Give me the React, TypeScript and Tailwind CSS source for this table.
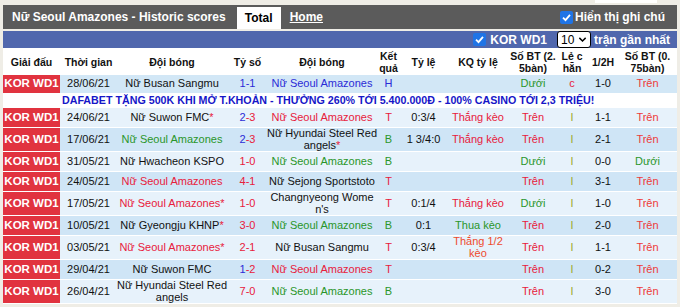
import type { ReactNode } from "react";

const RED = "text-[#e8203c]";
const RED2 = "text-[#ee3a3a]";
const GREEN = "text-[#2a962a]";
const BLUE = "text-[#2b2bd6]";
const OLIVE = "text-[#9aa522]";

const cols =
  "grid grid-cols-[57px_57px_110px_41px_108px_25px_45px_64px_46px_32px_30px_59px]";

type Match = {
  date: string;
  home: ReactNode;
  score: ReactNode;
  away: ReactNode;
  res: ReactNode;
  hdp: string;
  hdpRes: ReactNode;
  ou: ReactNode;
  oe: ReactNode;
  ht: string;
  ou2: ReactNode;
  tall?: boolean;
  dark?: boolean;
};

const Star = () => <span className={RED}>*</span>;

const Seoul = ({ c, star }: { c: string; star?: boolean }) => (
  <span className={c}>
    Nữ Seoul Amazones{star && "*"}
  </span>
);

const tren = <span className={RED}>Trên</span>;
const tren2 = <span className={RED2}>Trên</span>;
const duoi = <span className={GREEN}>Dưới</span>;
const le = <span className={OLIVE}>l</span>;

const matches: Match[] = [
  {
    date: "24/06/21",
    home: (
      <span>
        Nữ Suwon FMC<Star />
      </span>
    ),
    score: (
      <>
        <span className={BLUE}>2</span>
        <span className={RED}>-3</span>
      </>
    ),
    away: <Seoul c={RED} />,
    res: <span className={RED}>T</span>,
    hdp: "0:3/4",
    hdpRes: <span className={RED}>Thắng kèo</span>,
    ou: tren,
    oe: le,
    ht: "1-1",
    ou2: tren2,
  },
  {
    date: "17/06/21",
    home: <Seoul c={GREEN} />,
    score: (
      <>
        <span className={BLUE}>2</span>
        <span className={RED}>-3</span>
      </>
    ),
    away: (
      <span>
        Nữ Hyundai Steel Red
        <br />
        angels<Star />
      </span>
    ),
    res: <span className={GREEN}>B</span>,
    hdp: "1 3/4:0",
    hdpRes: <span className={RED}>Thắng kèo</span>,
    ou: tren,
    oe: le,
    ht: "2-1",
    ou2: tren2,
    tall: true,
    dark: true,
  },
  {
    date: "31/05/21",
    home: "Nữ Hwacheon KSPO",
    score: <span className={RED}>1-0</span>,
    away: <Seoul c={GREEN} />,
    res: <span className={GREEN}>B</span>,
    hdp: "",
    hdpRes: "",
    ou: duoi,
    oe: le,
    ht: "0-0",
    ou2: duoi,
  },
  {
    date: "24/05/21",
    home: <Seoul c={RED} />,
    score: <span className={RED}>4-1</span>,
    away: "Nữ Sejong Sportstoto",
    res: <span className={RED}>T</span>,
    hdp: "",
    hdpRes: "",
    ou: tren,
    oe: le,
    ht: "3-1",
    ou2: tren2,
    dark: true,
  },
  {
    date: "17/05/21",
    home: <Seoul c={RED} star />,
    score: <span className={RED}>1-0</span>,
    away: (
      <span>
        Changnyeong Wome
        <br />
        n's
      </span>
    ),
    res: <span className={RED}>T</span>,
    hdp: "0:1/4",
    hdpRes: <span className={RED}>Thắng kèo</span>,
    ou: duoi,
    oe: le,
    ht: "1-0",
    ou2: tren2,
    tall: true,
  },
  {
    date: "10/05/21",
    home: (
      <span>
        Nữ Gyeongju KHNP<Star />
      </span>
    ),
    score: <span className={RED}>3-0</span>,
    away: <Seoul c={GREEN} />,
    res: <span className={GREEN}>B</span>,
    hdp: "0:1",
    hdpRes: <span className={GREEN}>Thua kèo</span>,
    ou: tren,
    oe: le,
    ht: "2-0",
    ou2: tren2,
    dark: true,
  },
  {
    date: "03/05/21",
    home: <Seoul c={RED} star />,
    score: <span className={RED}>2-1</span>,
    away: "Nữ Busan Sangmu",
    res: <span className={RED}>T</span>,
    hdp: "0:3/4",
    hdpRes: (
      <span className="text-[#ee4a2c]">
        Thắng 1/2
        <br />
        kèo
      </span>
    ),
    ou: tren,
    oe: le,
    ht: "1-1",
    ou2: tren2,
    tall: true,
  },
  {
    date: "29/04/21",
    home: "Nữ Suwon FMC",
    score: (
      <>
        <span className={BLUE}>1</span>
        <span className={RED}>-2</span>
      </>
    ),
    away: <Seoul c={RED} />,
    res: <span className={RED}>T</span>,
    hdp: "",
    hdpRes: "",
    ou: tren,
    oe: le,
    ht: "0-2",
    ou2: tren2,
    dark: true,
  },
  {
    date: "26/04/21",
    home: (
      <span>
        Nữ Hyundai Steel Red
        <br />
        angels
      </span>
    ),
    score: <span className={RED}>7-0</span>,
    away: <Seoul c={GREEN} />,
    res: <span className={GREEN}>B</span>,
    hdp: "",
    hdpRes: "",
    ou: tren,
    oe: le,
    ht: "3-0",
    ou2: tren2,
    tall: true,
  },
];

const Check = () => (
  <span className="inline-flex h-[13px] w-[13px] items-center justify-center rounded-[2px] bg-[#1f74e6]">
    <svg viewBox="0 0 12 12" className="h-[11px] w-[11px]">
      <path d="M2.2 6.2 L4.9 8.8 L9.8 3.2" fill="none" stroke="white" strokeWidth="2" />
    </svg>
  </span>
);

const Cell = ({ children, className = "" }: { children?: ReactNode; className?: string }) => (
  <div
    className={`flex items-center justify-center overflow-visible whitespace-nowrap text-center ${className}`}
  >
    {children}
  </div>
);

const League = () => (
  <Cell className="bg-[#e1333f] text-[11.5px] font-bold text-white">KOR WD1</Cell>
);

function MatchRow({ m }: { m: Match }) {
  return (
    <div
      className={`${cols} border-b border-white ${m.tall ? "h-[24px]" : "h-[20px]"} ${
        m.dark ? "bg-[#cfe5f6]" : "bg-[#e7f2fb]"
      }`}
    >
      <League />
      <Cell>{m.date}</Cell>
      <Cell>{m.home}</Cell>
      <Cell>{m.score}</Cell>
      <Cell>{m.away}</Cell>
      <Cell>{m.res}</Cell>
      <Cell>{m.hdp}</Cell>
      <Cell>{m.hdpRes}</Cell>
      <Cell>{m.ou}</Cell>
      <Cell>{m.oe}</Cell>
      <Cell>{m.ht}</Cell>
      <Cell>{m.ou2}</Cell>
    </div>
  );
}

export default function App() {
  return (
    <div
      className="h-[307px] w-[680px] overflow-hidden bg-[#efede6] px-[3px] text-[#111]"
      style={{ fontFamily: '"Liberation Sans", Arial, sans-serif' }}
    >
      <div className="flex h-[5px] justify-end pr-[20px]">
        <div className="h-[3px] w-[62px] bg-white" />
      </div>
      {/* title bar */}
      <div className="flex h-[24px] items-end bg-[#5b5b5b] pl-[9px] pr-[12px] text-[12px] font-bold text-white">
        <div className="flex h-full items-center">Nữ Seoul Amazones - Historic scores</div>
        <div className="ml-[11px] flex h-[22px] w-[44px] items-center justify-center bg-white text-black">
          Total
        </div>
        <div className="ml-[9px] flex h-full items-center underline">Home</div>
        <div className="ml-auto flex h-full items-center gap-[2px]">
          <Check />
          <span>Hiển thị ghi chú</span>
        </div>
      </div>
      {/* blue bar */}
      <div className="mt-[2px] flex h-[17px] items-center justify-end bg-[#5067ad] pr-[7px] text-[12px] font-bold text-white">
        <Check />
        <span className="ml-[4px]">KOR WD1</span>
        <div className="ml-[10px] flex h-[17px] w-[34px] items-center justify-between rounded-[3px] border border-black bg-white px-[3px] text-[12px] font-normal text-black">
          10
          <svg viewBox="0 0 10 10" className="h-[9px] w-[9px]">
            <path d="M1.5 3.2 L5 6.7 L8.5 3.2" fill="none" stroke="black" strokeWidth="1.6" />
          </svg>
        </div>
        <span className="ml-[3px]">trận gần nhất</span>
      </div>
      {/* header */}
      <div className={`${cols} h-[27px] bg-white text-[10.5px] font-bold leading-[12px]`}>
        <Cell>Giải đấu</Cell>
        <Cell>Thời gian</Cell>
        <Cell>Đội bóng</Cell>
        <Cell>Tỷ số</Cell>
        <Cell>Đội bóng</Cell>
        <Cell>
          Kết
          <br />
          quả
        </Cell>
        <Cell>Tỷ lệ</Cell>
        <Cell>KQ tỷ lệ</Cell>
        <Cell>
          Số BT (2.
          <br />
          5bàn)
        </Cell>
        <Cell>
          Lẻ c
          <br />
          hẵn
        </Cell>
        <Cell>1/2H</Cell>
        <Cell>
          Số BT (0.
          <br />
          75bàn)
        </Cell>
      </div>
      <div className="text-[11px] leading-[11.5px] text-[#111]">
        <div className={`${cols} h-[19px] border-b border-white bg-[#d2e7f6]`}>
          <League />
          <Cell>28/06/21</Cell>
          <Cell>Nữ Busan Sangmu</Cell>
          <Cell className={BLUE}>1-1</Cell>
          <Cell>
            <Seoul c={BLUE} />
          </Cell>
          <Cell className={BLUE}>H</Cell>
          <Cell />
          <Cell />
          <Cell>{duoi}</Cell>
          <Cell className={RED}>c</Cell>
          <Cell>1-0</Cell>
          <Cell>{tren2}</Cell>
        </div>
        <div className="flex h-[14px] items-center bg-white pl-[59px] text-[10.7px] font-bold text-[#1616c8]">
          DAFABET TẶNG 500K KHI MỞ T.KHOẢN - THƯỞNG 260% TỚI 5.400.000Đ - 100% CASINO TỚI 2,3 TRIỆU!
        </div>
        {matches.map((m) => (
          <MatchRow key={m.date} m={m} />
        ))}
      </div>
    </div>
  );
}
